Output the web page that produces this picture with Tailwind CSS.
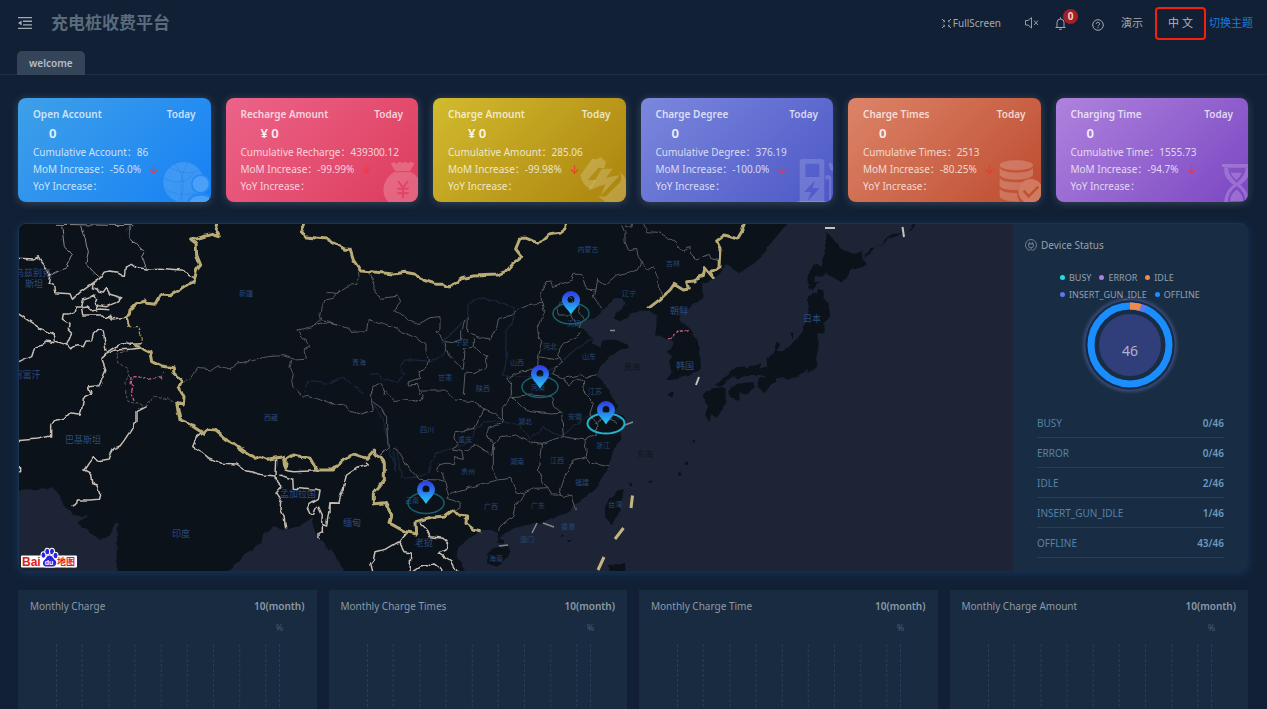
<!DOCTYPE html>
<html lang="zh">
  <head>
    <meta charset="utf-8" />
    <meta name="viewport" content="width=device-width,initial-scale=1" />
    <title>充电桩收费平台</title>
    <script src="https://cdn.jsdelivr.net/npm/@tailwindcss/browser@4"></script>
  </head>

  <body class="bg-[#112035] font-['Noto_Sans','Noto_Sans_CJK_SC',sans-serif] text-[10px]">
    <div class="h-screen overflow-hidden flex flex-col">
      <header class="h-[46px] shrink-0 flex items-center pl-[18px] pr-[14px] text-[#a3a9b1]">
        <button type="button" aria-label="menu" class="mr-[18px]">
          <svg class="w-[15px] h-[14px]" viewBox="0 0 15 14" fill="#a3a9b1"><path d="M0 1h14v1.3H0zM5 4.600h9v1.300H5zM5 8.200h9v1.300H5zM0 11.800h14v1.300H0zM0 7l3.600-2.600v5.200z"/></svg>
        </button>
        <h1 class="text-[17px] font-bold text-[#5c6b7c]">充电桩收费平台</h1>
        <div class="ml-auto flex items-center">
          <button type="button" class="flex items-center gap-px">
            <svg class="w-[11px] h-[11px]" viewBox="0 0 11 11" stroke="#a3a9b1" fill="none"><path d="M1 1l3 3M10 1L7 4M1 10l3-3M10 10L7 7" stroke-dasharray="3 .8"/><path d="M3.500 2v2H1.800M7.500 2v2h1.700M3.500 9V7H1.800M7.500 9V7h1.700" stroke-opacity=".6"/></svg>
            FullScreen
          </button>
          <button type="button" aria-label="sound off" class="ml-6">
            <svg class="w-[14px] h-[12px]" viewBox="0 0 14 12" stroke="#969da6" fill="none"><path d="M.5 3.500h2.500l3.500-3v10.500l-3.500-3H.5zM9 3.500l4 4.500M13 3.500l-4 4.500"/></svg>
          </button>
          <button type="button" aria-label="notifications" class="ml-4 relative">
            <svg class="w-[11px] h-[13px]" viewBox="0 0 11 13" stroke="#a3a9b1" fill="none"><path d="M.5 10.500h10M2 10.500V5.500a3.500 3.500 0 0 1 7 0v5M5.500 2V.3M4 12.300h3"/></svg>
            <span class="absolute -top-2 left-2 w-[15px] h-[15px] rounded-full bg-[#a61d24] text-[#e3d5d6] leading-[15px] font-bold text-center">0</span>
          </button>
          <button type="button" aria-label="help" class="ml-[26px] mt-1">
            <svg class="w-3 h-3" viewBox="0 0 12 12" stroke="#a3a9b1" fill="none"><circle cx="6" cy="6" r="5.300"/><path d="M4.300 4.800a1.700 1.500 0 1 1 2.500 1.300q-.8.4-.8 1.200M6 8.300v1"/></svg>
          </button>
          <span class="ml-[17px] text-[11px]">演示</span>
          <button type="button" class="ml-3 w-[51px] h-[33px] border-2 border-[#f2200f] rounded-sm text-[11px] text-[#b2b7bd] text-center">中 文</button>
          <a href="#" class="ml-[3px] text-[11px] text-[#177ddc]">切换主题</a>
        </div>
      </header>

      <nav class="h-[29px] shrink-0 pt-[5px] pl-[17px] border-b border-[#1e2d41]">
        <a href="#" class="inline-block h-6 leading-6 px-3 rounded-t-[5px] bg-[#34455a] font-semibold text-[#b7bdc4]">welcome</a>
      </nav>

      <main class="flex-1 min-h-0 flex flex-col pt-[23px] pl-[18px] pr-[19px]">
        <!-- summary cards -->
        <section class="grid grid-cols-6 gap-[15px] shrink-0 font-['Noto_Sans','Noto_Sans_CJK_TC',sans-serif]">
          <article class="relative overflow-hidden h-[104px] rounded-lg px-[15px] pt-2 text-white/75 leading-[17px] bg-linear-135 from-[#3ea0e8] to-[#1580f5] shadow-[0_1px_9px_#8a96a055]">
            <svg class="absolute right-0 bottom-0 w-[50px] h-[45px]" viewBox="480 470 150 135"><circle cx="548" cy="546" r="61" fill="#fff" fill-opacity=".14"/><g stroke="#1d7cd8" stroke-opacity=".5" stroke-width="2" fill="none"><path d="M520 490q50 55 12 115M560 486q-30 50-15 120M490 535q50 25 85-10M492 565q40 25 90 15M505 500q50 30 90 10"/></g><circle cx="599" cy="551" r="29" fill="#2489f3"/><circle cx="599" cy="551" r="24" fill="#4a9ff6"/><path d="M557 607q8-28 42-28t42 28z" fill="#2489f3"/><path d="M564 607q8-21 35-21t35 21z" fill="#4a9ff6"/></svg>
            <h2 class="flex justify-between font-semibold leading-4"><span>Open Account</span><span>Today</span></h2>
            <p class="pl-4 text-[13px] leading-[22px] font-semibold text-white/90">0</p>
            <p>Cumulative Account：86</p>
            <p class="flex items-center gap-2">MoM Increase：-56.0%<svg class="w-[9px] h-[9px]" viewBox="0 0 9 9" stroke="#d8434e" stroke-width="1.300" fill="none"><path d="M4.500 0v8M1 4.500l3.500 3.700L8 4.500"/></svg></p>
            <p>YoY Increase：</p>
          </article>
          <article class="relative overflow-hidden h-[104px] rounded-lg px-[15px] pt-2 text-white/75 leading-[17px] bg-linear-135 from-[#ec6389] to-[#dd3a5c] shadow-[0_1px_9px_#8a96a055]">
            <svg class="absolute right-0 bottom-0 w-[50px] h-[45px]" viewBox="1104 470 150 135"><path d="M1172 490l10-4 8 4 8-6 9 4 8-4 9 5 8-5 12 5-14 24q34 20 35 54 0 28-20 42h-75q-20-14-20-42 2-34 36-54z" fill="#fff" fill-opacity=".2"/><path d="M1182 514h50" stroke="#e04466" stroke-width="3"/><path d="M1194 542l15 20 15-20M1209 562v32M1192 565h34M1192 579h34" stroke="#e04466" stroke-width="6" fill="none"/></svg>
            <h2 class="flex justify-between font-semibold leading-4"><span>Recharge Amount</span><span>Today</span></h2>
            <p class="pl-5 text-[13px] leading-[22px] font-semibold text-white/90">¥ 0</p>
            <p>Cumulative Recharge：439300.12</p>
            <p class="flex items-center gap-2">MoM Increase：-99.99%<svg class="w-[9px] h-[9px]" viewBox="0 0 9 9" stroke="#f03a45" stroke-width="1.300" fill="none"><path d="M4.500 0v8M1 4.500l3.500 3.700L8 4.500"/></svg></p>
            <p>YoY Increase：</p>
          </article>
          <article class="relative overflow-hidden h-[104px] rounded-lg px-[15px] pt-2 text-white/75 leading-[17px] bg-linear-135 from-[#d2bb2e] to-[#ab830b] shadow-[0_1px_9px_#8a96a055]">
            <svg class="absolute right-0 bottom-0 w-[50px] h-[45px]" viewBox="467 230 150 135"><g fill="#fff" fill-opacity=".2"><path d="M480 285l35-50 14 2 12-7 16 14-5 20-18-2-32 38 25-2-17 28q-25-12-30-41z"/><path d="M545 265l-42 66 52-20-14 35 58-62-42 8 20-27z"/><path d="M600 275q18 14 17 35v55h-62l-22-18 22 2 45-44q5-12 0-30z"/></g></svg>
            <h2 class="flex justify-between font-semibold leading-4"><span>Charge Amount</span><span>Today</span></h2>
            <p class="pl-5 text-[13px] leading-[22px] font-semibold text-white/90">¥ 0</p>
            <p>Cumulative Amount：285.06</p>
            <p class="flex items-center gap-2">MoM Increase：-99.98%<svg class="w-[9px] h-[9px]" viewBox="0 0 9 9" stroke="#ec4530" stroke-width="1.300" fill="none"><path d="M4.500 0v8M1 4.500l3.500 3.700L8 4.500"/></svg></p>
            <p>YoY Increase：</p>
          </article>
          <article class="relative overflow-hidden h-[104px] rounded-lg px-[15px] pt-2 text-white/75 leading-[17px] bg-linear-135 from-[#7c87dd] to-[#4d57c6] shadow-[0_1px_9px_#8a96a055]">
            <svg class="absolute right-0 bottom-0 w-[50px] h-[45px]" viewBox="1088 230 150 135"><g fill="#fff" fill-opacity=".16"><path fill-rule="evenodd" d="M1146 236h58q8 0 8 8v121h-74V244q0-8 8-8zM1155 250v40h42v-40zM1184 300l-32 35h20l-10 27 36-38h-22z"/><path d="M1130 362h90v3h-90z"/><path d="M1224 252l6-6 10 11v18l-10-6zM1215 285h12q6 0 6 8v62h8v8h-15v-66h-11z"/></g></svg>
            <h2 class="flex justify-between font-semibold leading-4"><span>Charge Degree</span><span>Today</span></h2>
            <p class="pl-4 text-[13px] leading-[22px] font-semibold text-white/90">0</p>
            <p>Cumulative Degree：376.19</p>
            <p class="flex items-center gap-2">MoM Increase：-100.0%<svg class="w-[9px] h-[9px]" viewBox="0 0 9 9" stroke="#cf3f66" stroke-width="1.300" fill="none"><path d="M4.500 0v8M1 4.500l3.500 3.700L8 4.500"/></svg></p>
            <p>YoY Increase：</p>
          </article>
          <article class="relative overflow-hidden h-[104px] rounded-lg px-[15px] pt-2 text-white/75 leading-[17px] bg-linear-135 from-[#dc8468] to-[#bd4a2e] shadow-[0_1px_9px_#8a96a055]">
            <svg class="absolute right-0 bottom-0 w-[50px] h-[45px]" viewBox="452 470 150 135"><g fill="#fff" fill-opacity=".2"><ellipse cx="528" cy="495" rx="50" ry="15"/><path d="M478 503q8 14 50 14t50-14v22q-10 13-50 13t-50-13zM478 533q8 13 50 13 14 0 24-2-16 12-20 26-46 0-54-13zM478 565q8 13 52 13 0 14 8 26-50 0-60-14z"/></g><circle cx="571" cy="573" r="37" fill="#d27a61"/><path d="M550 571l15 17 29-29" stroke="#c0522f" stroke-width="8" fill="none"/></svg>
            <h2 class="flex justify-between font-semibold leading-4"><span>Charge Times</span><span>Today</span></h2>
            <p class="pl-4 text-[13px] leading-[22px] font-semibold text-white/90">0</p>
            <p>Cumulative Times：2513</p>
            <p class="flex items-center gap-2">MoM Increase：-80.25%<svg class="w-[9px] h-[9px]" viewBox="0 0 9 9" stroke="#ec3a3a" stroke-width="1.300" fill="none"><path d="M4.500 0v8M1 4.500l3.500 3.700L8 4.500"/></svg></p>
            <p>YoY Increase：</p>
          </article>
          <article class="relative overflow-hidden h-[104px] rounded-lg px-[15px] pt-2 text-white/75 leading-[17px] bg-linear-135 from-[#af82dd] to-[#7c46c2] shadow-[0_1px_9px_#8a96a055]">
            <svg class="absolute right-0 bottom-0 w-[50px] h-[45px]" viewBox="1074 470 150 135"><g fill="#fff" fill-opacity=".2"><path d="M1146 491h78v9h-78z"/><path fill-rule="evenodd" d="M1153 501h75v14q-2 22-27 38 25 20 27 52h-75q0-32 27-52-25-18-27-38zM1164 503q0 22 26 44v10q-25 16-27 48h54q-2-32-27-48v-10q27-22 27-44z"/><path d="M1172 517h34q-5 12-17 22-12-10-17-22zM1190 568q18 12 20 34h-40q2-22 20-34z"/></g></svg>
            <h2 class="flex justify-between font-semibold leading-4"><span>Charging Time</span><span>Today</span></h2>
            <p class="pl-4 text-[13px] leading-[22px] font-semibold text-white/90">0</p>
            <p>Cumulative Time：1555.73</p>
            <p class="flex items-center gap-2">MoM Increase：-94.7%<svg class="w-[9px] h-[9px]" viewBox="0 0 9 9" stroke="#e53a50" stroke-width="1.300" fill="none"><path d="M4.500 0v8M1 4.500l3.500 3.700L8 4.500"/></svg></p>
            <p>YoY Increase：</p>
          </article>
        </section>

        <!-- station map and device status -->
        <section class="mt-[21px] h-[348px] shrink-0 flex overflow-hidden rounded-lg border-t border-l border-[#1a3450] bg-[#182c43] shadow-[0_2px_9px_#17365c]">
          <div class="flex-1 min-w-0">
            <svg class="w-full h-full" viewBox="19 224 994 347" preserveAspectRatio="xMidYMid slice" fill="none" stroke-linejoin="round">
              <defs>
                <filter id="rough" x="0" y="0" width="100%" height="100%" color-interpolation-filters="sRGB"><feTurbulence type="fractalNoise" baseFrequency=".14" numOctaves="1" seed="4"/><feDisplacementMap in="SourceGraphic" scale="5" xChannelSelector="R" yChannelSelector="G"/></filter>
                <linearGradient id="pinFill" x1="0" y1="0" x2="0" y2="1"><stop offset="0" stop-color="#3138e6"/><stop offset=".5" stop-color="#2a7ef0"/><stop offset="1" stop-color="#25d2ec"/></linearGradient>
                <path id="pin" fill="url(#pinFill)" fill-rule="evenodd" d="M0 0C-2-4-9-9-9-14.500a9 9 0 0 1 18 0C9-9 2-4 0 0zM0-18.500a3.500 3.500 0 1 0 0 7 3.500 3.500 0 1 0 0-7z"/>
              </defs>
              <rect x="0" y="200" width="1040" height="400" fill="#0b1219"/>
              <g filter="url(#rough)">
                <rect x="0" y="200" width="1040" height="400" fill="#0b1219"/>
                <!-- seas -->
                <g fill="#1c2435">
                  <path transform="translate(0 390) scale(.33333)" d="M30 300L110 297 160 292 180 318 190 345 222 375 250 382 280 373 235 398 300 450 335 435 340 400 352 402 350 500 362 590H30zM665 590L685 542 725 500 785 455 790 430 820 412 860 418 890 410 910 400 935 385 940 410 960 450 975 455 985 480 1000 490 1010 510 1030 530V590z"/>
                  <path transform="translate(330 215) scale(.33333)" d="M750 325L770 315 800 305 820 285 845 262 850 250 880 250 887 265 870 285 850 310 870 320 890 305 920 290 965 290 980 300 980 330 975 360 1000 372 1030 372V540H845L825 510 800 480 810 455 840 425 865 405 895 400 895 390 870 380 840 370 820 380 810 395 785 385 790 372 770 350 750 340z"/>
                  <path transform="translate(330 390) scale(.33333)" d="M835 0L848 25 865 45 850 65 885 80 885 100 875 110 870 150 850 180 835 235 820 260 800 295 770 320 735 345 710 370 660 385 635 400 590 405 550 415 525 430 505 445 525 455 520 465 500 455 505 430 485 420 455 420 415 445 385 475 380 500 405 542V590H1030V0zM0 470L15 495 25 520 35 590H0z"/>
                  <rect x="670" y="200" width="370" height="400"/>
                </g>
                <!-- islands and peninsulas -->
                <g fill="#0b1219">
                  <path transform="translate(660 215) scale(.33333)" d="M0-20H400L380 28 320 100 305 125 265 160 235 175 205 150 192 148 180 180 130 205 130 248 90 275 60 300 58 315 85 335 118 395 122 440 118 465 90 480 40 495 20 495 35 470 28 440 38 425 20 410 35 400 38 375 15 370 0 355zM497 52L510 60 540 100 580 120 610 105 605 130 622 148 570 165 560 180 545 203 500 175 485 185 465 182 462 200 480 205 455 222 445 215 442 185 458 165 460 148 485 155 490 130 500 100 495 70zM475 222L490 225 492 250 505 270 510 300 490 330 492 350 475 355 475 400 468 430 472 450 455 470 440 478 445 460 415 485 390 490 345 490 340 480 350 500 330 510 315 535 293 515 300 490 320 485 300 480 260 480 235 490 215 485 185 515 165 510 190 490 230 455 260 460 300 447 300 460 325 455 322 430 345 405 345 385 362 382 350 408 370 408 400 380 425 355 440 320 450 290 440 255 460 232 470 240zM210 515L250 505 280 500 285 520 265 535 240 535 235 558 215 550 205 530zM125 540L160 515 195 520 200 545 190 575 170 612 155 600 148 618 135 600 145 575zM390 355L402 350 398 370zM612 130L630 98 648 98 635 110zM658 95L690 60 725 50 715 62 690 70zM740 48L770 20 762 38zM20 535L42 530 38 542 22 543z"/>
                  <path transform="translate(330 390) scale(.33333)" d="M470 490L490 475 530 468 542 485 525 515 500 530 472 520zM840 325L865 300 880 298 878 320 865 370 845 405 825 375 825 350zM835 525L885 522 890 590H835zM898 278h8v7h-8zM955 272h10v6h-10zM692 434h8v6h-8zM716 447h9v6h-9zM1090 150h8v10h-8zM1065 215h9v9h-9zM1045 245h9v9h-9z"/>
                </g>
                <!-- rivers -->
                <g stroke="#1a2438" stroke-width="4">
                  <path transform="translate(0 215) scale(.33333)" d="M915 530L920 500 990 505 1020 490M375 45L392 35V60z"/>
                  <path transform="translate(330 215) scale(.33333)" d="M412 307L415 270 450 247 520 265 555 280 552 310 530 345 527 400 530 430 520 480 620 485 680 455M0 500L40 487 70 510 100 535M120 480H145L165 495 200 500 225 480 210 455 225 435 260 435 300 440 340 420 350 400 335 385 405 315M790 370L740 400 700 435"/>
                  <path transform="translate(330 390) scale(.33333)" d="M128 40L160 90 175 170 200 240 190 180M200 180L215 265 260 262 295 250 300 220 325 185 370 175 430 150 430 120 465 95 520 95 570 110 600 145 640 110 670 130 700 135 760 85 800 70 880 90"/>
                </g>
                <!-- province borders -->
                <g stroke="#5a5b60" stroke-width="3">
                  <path transform="translate(0 215) scale(.33333)" d="M550 498L570 492 590 460 635 465 655 452 690 462 710 445 770 435 800 425 850 422 890 435 920 432 912 405 930 395 912 370 890 345 940 335 965 312 960 295 975 255 1000 250 1020 225M965 315L985 318 1020 330M875 435L870 460 880 475 875 500 880 520 910 543 950 550 985 565 1020 567"/>
                  <path transform="translate(0 215) scale(.33333)" stroke-dasharray="9 5" d="M385 407L355 415 350 440 380 460 390 480 375 500 378 540 385 560 437 573 447 560 465 543 490 553 505 547 520 563"/>
                  <path transform="translate(330 215) scale(.33333)" d="M-10 232L20 235 60 210 80 208 88 185 85 170M118 172L135 210 135 235 155 250 205 243 212 260 190 285 220 300 235 317 270 325 300 308 330 305 330 340 318 350 345 380 370 383 395 373 395 350 405 315 412 307M-40 330L0 322 55 337 65 352 110 350 115 313 145 325 195 335 215 350 260 370 285 390 285 410 295 435 290 455 270 470 272 490 232 500 235 510 260 508 270 540M412 310L410 345 440 365 480 372 500 335 505 312 545 300 575 278 600 268 635 265M345 382L355 420 375 440 400 462 405 410 400 400 430 393 430 370M430 395L470 425 470 455 435 475 405 475 400 540M635 265L632 230 648 200 662 198 668 215 725 195 732 178 755 178 770 225 795 228M815 280L805 265 790 245 795 225 800 190 825 210 860 180 925 165 935 145 925 125 920 100 895 105 885 80 885 50 875 28M885 30L905 40 908 28M940 20L950 50 985 52 1010 65 1035 80 1045 97 1060 108 1080 97 1082 115 1100 135 1138 118 1142 130 1165 137M935 140L955 165 968 155 985 190 985 215 998 240M635 265L645 290 620 350 635 380 625 425 680 435 690 430M755 355L700 385 680 415 695 440 665 475 700 490 755 478 770 490 800 475M625 425L622 465 575 467 530 490 545 510 540 540M125 540V515L150 505 165 525 162 540M700 490L715 515 735 490 760 500 765 540M690 262L720 245 748 275 745 290 760 310 750 340 738 325 725 300 685 300 680 280 690 262"/>
                  <path transform="translate(330 390) scale(.33333)" d="M0 42L35 40 60 65 95 72 130 60 125 40V0M128 35L155 55 170 85 170 110 175 170 165 180 150 195M190 175L210 190 225 215 240 240 265 268 330 270 345 275 335 250 320 240 325 225 345 220 375 220 370 200 400 205 395 185 370 180 385 160 370 150 375 125 405 122 430 115 465 60 500 75 520 90 515 100 475 115 470 135 490 160 485 195 440 165 400 185M490 165V235L500 270 425 290 370 310 355 315 345 275M355 318L350 325 390 340 390 355 370 362M500 270L545 265 560 305 580 312 575 330 555 345 550 375 510 410 505 420M580 310L615 295 655 293 640 280 625 240 635 160 600 155 560 135 510 140 490 165M655 295L665 312 690 312 700 320 725 315 740 360M690 312L700 270 730 210 770 200M635 160L700 140 765 150 770 200 785 220 838 230M700 140L695 70 670 45 665 20 600 15 545 20 540 0M545 20L520 50 520 90M545 20L575 50 600 65 665 72 690 70M765 150L800 130 800 100 780 70 790 40 770 20 760 0M165 0L195 35 230 28 270 35 280 15 270 0 340 0 375 30 430 35 465 60M790 100L830 85 860 95"/>
                </g>
                <g stroke="#8d8b8d" stroke-width="3"><path transform="translate(0 215) scale(.33333)" d="M165 28L400 32M185 32L193 95 215 120 200 150 205 153 145 182M245 32L265 110 258 145 280 170 300 188M390 35V70L410 88 420 102 435 108 425 125 440 160"/></g>
                <!-- country borders -->
                <g stroke="#c6bdb4" stroke-width="4.500">
                  <path transform="translate(0 215) scale(.33333)" d="M50 130L103 132 115 125 122 137 135 152 150 180 145 203 160 208 164 233 210 236 217 253 240 232 300 190 312 172 330 168 352 172 373 183 376 156 397 148 410 157 440 162 480 160 550 166 563 180 582 187M300 190L280 205 277 218 290 222 297 232 310 234 320 220 330 238 365 248 350 262 340 266 320 275 295 272 283 265 290 250 285 240 270 248 250 255 245 275 225 277M245 280L248 300 285 300 310 300 318 308 330 304 338 312 375 307M245 278L262 276 275 285 300 282 325 284M290 272V290M228 280L225 290 210 296 190 297 187 312 207 325 205 345 215 355 200 390 210 402 230 392 250 395 258 378 275 377 280 355 292 343 310 348 318 410M50 293L90 320 120 340 160 358 163 378 200 390M50 446L95 425 105 395 130 390 140 378 163 383M320 412L345 396 375 382 395 388 425 386M425 398L400 402 345 405 318 418 305 430 318 465 305 495 297 512 265 515 275 540"/>
                  <path transform="translate(0 390) scale(.33333)" d="M275 12L250 25 245 60 240 73 210 68 195 85 160 92 152 105 152 138 110 147 50 152M437 50L408 65 408 95 390 125 370 155 360 168 342 175 325 207 292 213 280 200 265 220 252 240 272 250 275 280 290 285 302 320 298 328 270 330 232 330 230 340 215 348M605 127L590 140 578 170 600 183 625 203 665 220 710 222 740 242 790 255 828 258 830 205M848 225L855 240 880 245 950 242M838 255L860 262 878 268 880 295 945 300 960 303 955 325 930 340 922 355 930 372 940 375 950 350M828 258L830 275 845 290 828 310 845 335 843 360 852 380 857 415M955 350L967 375 965 400 980 405 985 375 990 338 1018 340M967 400V425L957 430V448M50 230H62V245H50M275 12V0"/>
                  <path transform="translate(330 390) scale(.33333)" d="M0 370V340L25 340 40 295 50 255 80 235 115 225 105 215M270 398L290 418 300 440 340 445 355 465 345 480 325 490 345 503 365 515 390 560M230 430L210 455 195 460 165 478 135 485 130 510 122 520 132 560M210 457L225 485 242 490 240 550 270 530 290 530 310 520 330 535 348 560"/>
                </g>
                <g stroke="#b9ab76" stroke-width="9">
                  <path transform="translate(0 215) scale(.33333)" d="M655 15L648 45 658 65 635 58 575 75 588 85 590 120 602 150 590 165 583 197 545 222 510 242 480 240 465 268 440 265 437 258 410 265 390 285 388 298 378 305 387 335M405 392L425 398 435 405 450 412 455 440 480 452 520 458 522 475 545 498 537 515 552 545 550 570 530 565 540 615 560 623 580 635 610 655 625 643 645 645 680 675 700 685 730 707 765 730 780 725 800 733 850 725 855 760 860 733 880 720 930 730 950 765 1000 765 1010 755 1035 730 1065 718 1100 730 1120 708 1140 730 1153 745V795L1120 835V867L1155 863 1175 900 1170 925 1215 950 1250 957 1248 920 1290 907 1335 903 1360 885 1375 900 1400 903 1398 925 1420 943 1445 948M918 15L905 50 912 65 980 72 1035 103 1050 103 1060 135 1082 168 1130 172 1180 177 1215 172 1248 178 1260 192 1310 208 1332 208 1348 216 1390 190 1420 183 1490 180 1515 170 1538 145 1565 125 1547 102 1560 70 1580 70 1615 85 1645 57 1680 52 1697 40 1700 15"/>
                  <path transform="translate(660 215) scale(.33333)" d="M258 15L245 50 232 72 195 60 170 78 180 100 177 155 155 170 160 188 135 158 130 182 118 185 105 198 80 200 85 222 70 225 42 208 30 225 0 253-35 280"/>
                </g>
                <g stroke-width="4" stroke-dasharray="10 5">
                  <path stroke="#a3955f" transform="translate(0 215) scale(.33333)" d="M387 335H412L420 345 425 385"/>
                  <path stroke="#ca5c86" transform="translate(0 215) scale(.33333)" d="M490 470L480 495 475 485 445 493 420 486 393 485 390 510 400 515 393 535 402 557"/>
                  <path stroke="#ca5c86" transform="translate(660 215) scale(.33333)" d="M25 368H38L50 348H80L87 342"/>
                </g>
              </g>
              <g stroke="#c4b67e" stroke-width="3"><path d="M632.500 495.500L631 508M623.500 528L615 539M604 557L598 570"/></g>
              <g stroke="#c6c2bd" stroke-width="2"><path d="M825 228H835M902.500 227L904 237M699 377L696 385"/><path stroke="#85878a" stroke-width="1.500" d="M532 533L537 523M543 523L554 527M499 546L508 545M625 425L633 422M610 330.500H615"/></g>

              <!-- region names -->
              <g font-size="7" fill="#28477a" text-anchor="middle">
                <text x="246" y="296">新疆</text><text x="271" y="420">西藏</text><text x="359" y="365">青海</text><text x="445" y="380">甘肃</text><text x="462" y="345">宁夏</text><text x="588" y="252">内蒙古</text><text x="483" y="391">陕西</text><text x="517" y="365">山西</text><text x="550" y="349">河北</text><text x="574" y="326">天津</text><text x="589" y="359">山东</text><text x="629" y="296">辽宁</text><text x="673" y="266">吉林</text><text x="538" y="390">河南</text><text x="595" y="394">江苏</text><text x="575" y="419">安徽</text><text x="603" y="448">浙江</text><text x="525" y="424">湖北</text><text x="517" y="464">湖南</text><text x="557" y="463">江西</text><text x="465" y="442">重庆</text><text x="427" y="432">四川</text><text x="468" y="474">贵州</text><text x="412" y="503">云南</text><text x="491" y="509">广西</text><text x="538" y="508">广东</text><text x="582" y="485">福建</text><text x="615" y="507">台湾</text><text x="568" y="529">香港</text><text x="527" y="542">澳门</text><text x="496" y="561">海南</text>
              </g>
              <g font-size="9" fill="#2d4c80" text-anchor="middle">
                <text x="33" y="276">乌兹别克</text><text x="34" y="287">斯坦</text><text x="27" y="378">阿富汗</text><text x="83" y="443">巴基斯坦</text><text x="181" y="537">印度</text><text x="298" y="497">孟加拉国</text><text x="352" y="526">缅甸</text><text x="424" y="546">老挝</text><text x="679" y="314">朝鲜</text><text x="685" y="369">韩国</text><text x="812" y="322">日本</text>
              </g>
              <g font-size="8" fill="#10161f" text-anchor="middle"><text x="632" y="370">黄海</text><text x="645" y="457">东海</text></g>

              <!-- stations -->
              <g stroke="#17606e" stroke-width="1.500"><ellipse cx="571" cy="313.500" rx="18" ry="10.500"/><ellipse cx="540" cy="387" rx="18" ry="10.500"/><ellipse cx="426" cy="503" rx="18" ry="10.500"/><ellipse cx="606" cy="423.500" rx="18.500" ry="10" stroke="#22b3cf" stroke-width="2"/></g>
              <use href="#pin" x="571" y="314.500"/><use href="#pin" x="540" y="388.500"/><use href="#pin" x="606" y="424.500"/><use href="#pin" x="426" y="504"/>

              <!-- map provider mark -->
              <g font-family="'Liberation Sans','Noto Sans CJK SC',sans-serif" font-weight="bold" stroke="#fff" stroke-width="2" paint-order="stroke">
                <path fill="#fff" d="M22 556.500H76V566.500H22z"/>
                <text x="22" y="566" font-size="12" fill="#e01a1a">Bai</text>
                <text x="57" y="565" font-size="9" fill="#e01a1a">地图</text>
                <g fill="#2a22dd"><ellipse cx="43.500" cy="555" rx="2" ry="2.700"/><ellipse cx="47.300" cy="551.500" rx="2" ry="2.700"/><ellipse cx="52" cy="551.500" rx="2" ry="2.700"/><ellipse cx="55.500" cy="555.500" rx="2" ry="2.700"/><path d="M49.500 555.500c3 0 3.500 3 5.500 4.500 2.500 2.200 1 6.500-2 6.500h-7c-3.500 0-4-4.500-1.500-6.500 2-1.500 2-4.500 5-4.500z"/></g>
                <text x="49" y="565" font-size="7" fill="#fff" stroke="none" text-anchor="middle">du</text>
              </g>
            </svg>
          </div>

          <aside class="w-[235px] shrink-0 flex flex-col text-[#95a1ad]">
            <h2 class="flex items-center gap-1 h-[42px] pl-3">
              <svg class="w-3 h-3" viewBox="0 0 12 12" stroke="#7e8c99" fill="none" stroke-width=".9"><path d="M4.800 11.400a5.500 5.500 0 1 1 2.400 0M3.500 5h5v1.500a2.500 2.300 0 0 1-5 0zM4.700 5V3M7.300 5V3M6 9v2.500"/></svg>
              Device Status
            </h2>
            <ul class="mt-[3px] flex flex-wrap gap-x-2 pl-[47px] pr-8 text-[9px] leading-[17px]">
              <li class="flex items-center gap-1"><i class="w-[5px] h-[5px] rounded-full bg-[#1ce0e6]"></i>BUSY</li>
              <li class="flex items-center gap-1"><i class="w-[5px] h-[5px] rounded-full bg-[#a97de8]"></i>ERROR</li>
              <li class="flex items-center gap-1"><i class="w-[5px] h-[5px] rounded-full bg-[#ee8a4a]"></i>IDLE</li>
              <li class="flex items-center gap-1"><i class="w-[5px] h-[5px] rounded-full bg-[#5b78f0]"></i>INSERT_GUN_IDLE</li>
              <li class="flex items-center gap-1"><i class="w-[5px] h-[5px] rounded-full bg-[#1e90ff]"></i>OFFLINE</li>
            </ul>
            <svg class="-mt-2 h-[100px] w-full shrink-0" viewBox="0 0 235 100" fill="none">
              <defs><filter id="glow" x="-20%" y="-20%" width="140%" height="140%"><feGaussianBlur stdDeviation="1.500"/></filter></defs>
              <circle cx="117" cy="50" r="46" stroke="#6a78a8" stroke-width="2" filter="url(#glow)" opacity=".5"/>
              <circle cx="117" cy="50" r="45.500" stroke="#37488a"/>
              <circle cx="117" cy="50" r="44.500" fill="#182c43"/>
              <g stroke-width="7" transform="rotate(-90 117 50)">
                <circle cx="117" cy="50" r="39" stroke="#1a8dff"/>
                <circle cx="117" cy="50" r="39" stroke="#5b78f0" pathLength="46" stroke-dasharray="3 43"/>
                <circle cx="117" cy="50" r="39" stroke="#ee8a4a" pathLength="46" stroke-dasharray="2 44"/>
              </g>
              <circle cx="117" cy="50" r="31" fill="#303e79"/>
              <text x="117" y="61" font-size="14" fill="#aeb4d3" text-anchor="middle">46</text>
            </svg>
            <table class="mt-3 mx-6 text-[#5482a3]">
              <tbody>
                <tr class="h-[30px] border-b border-[#293f57]"><td class="pt-[3px]">BUSY</td><td class="pt-[3px] text-right font-semibold text-[#6b9abd]">0/46</td></tr>
                <tr class="h-[30px] border-b border-[#293f57]"><td class="pt-[3px]">ERROR</td><td class="pt-[3px] text-right font-semibold text-[#6b9abd]">0/46</td></tr>
                <tr class="h-[30px] border-b border-[#293f57]"><td class="pt-[3px]">IDLE</td><td class="pt-[3px] text-right font-semibold text-[#6b9abd]">2/46</td></tr>
                <tr class="h-[30px] border-b border-[#293f57]"><td class="pt-[3px]">INSERT_GUN_IDLE</td><td class="pt-[3px] text-right font-semibold text-[#6b9abd]">1/46</td></tr>
                <tr class="h-[30px] border-b border-[#293f57]"><td class="pt-[3px]">OFFLINE</td><td class="pt-[3px] text-right font-semibold text-[#6b9abd]">43/46</td></tr>
              </tbody>
            </table>
          </aside>
        </section>

        <!-- monthly charts -->
        <svg class="hidden"><defs><g id="grid" stroke="#2b3d53" stroke-dasharray="3 2"><line x1="12.900%" x2="12.900%" y1="26" y2="400"/><line x1="21.500%" x2="21.500%" y1="26" y2="400"/><line x1="30.500%" x2="30.500%" y1="26" y2="400"/><line x1="39.200%" x2="39.200%" y1="26" y2="400"/><line x1="48%" x2="48%" y1="26" y2="400"/><line x1="56.700%" x2="56.700%" y1="26" y2="400"/><line x1="65.500%" x2="65.500%" y1="26" y2="400"/><line x1="74.300%" x2="74.300%" y1="26" y2="400"/><line x1="83%" x2="83%" y1="26" y2="400"/><line x1="87.600%" x2="87.600%" y1="26" y2="400"/></g></defs></svg>
        <section class="mt-[19px] flex-1 min-h-0 grid grid-cols-4 gap-3 text-[#8d9aa6]">
          <article class="bg-[#182b41] overflow-hidden pt-2">
            <h2 class="flex justify-between px-3 leading-4 mb-1"><span>Monthly Charge</span><span class="font-semibold">10(month)</span></h2>
            <svg class="w-full h-[200px]"><use href="#grid"/><text x="87.600%" y="13" font-size="9" fill="#4b5b6d" text-anchor="middle">%</text></svg>
          </article>
          <article class="bg-[#182b41] overflow-hidden pt-2">
            <h2 class="flex justify-between px-3 leading-4 mb-1"><span>Monthly Charge Times</span><span class="font-semibold">10(month)</span></h2>
            <svg class="w-full h-[200px]"><use href="#grid"/><text x="87.600%" y="13" font-size="9" fill="#4b5b6d" text-anchor="middle">%</text></svg>
          </article>
          <article class="bg-[#182b41] overflow-hidden pt-2">
            <h2 class="flex justify-between px-3 leading-4 mb-1"><span>Monthly Charge Time</span><span class="font-semibold">10(month)</span></h2>
            <svg class="w-full h-[200px]"><use href="#grid"/><text x="87.600%" y="13" font-size="9" fill="#4b5b6d" text-anchor="middle">%</text></svg>
          </article>
          <article class="bg-[#182b41] overflow-hidden pt-2">
            <h2 class="flex justify-between px-3 leading-4 mb-1"><span>Monthly Charge Amount</span><span class="font-semibold">10(month)</span></h2>
            <svg class="w-full h-[200px]"><use href="#grid"/><text x="87.600%" y="13" font-size="9" fill="#4b5b6d" text-anchor="middle">%</text></svg>
          </article>
        </section>
      </main>
    </div>
  </body>
</html>
